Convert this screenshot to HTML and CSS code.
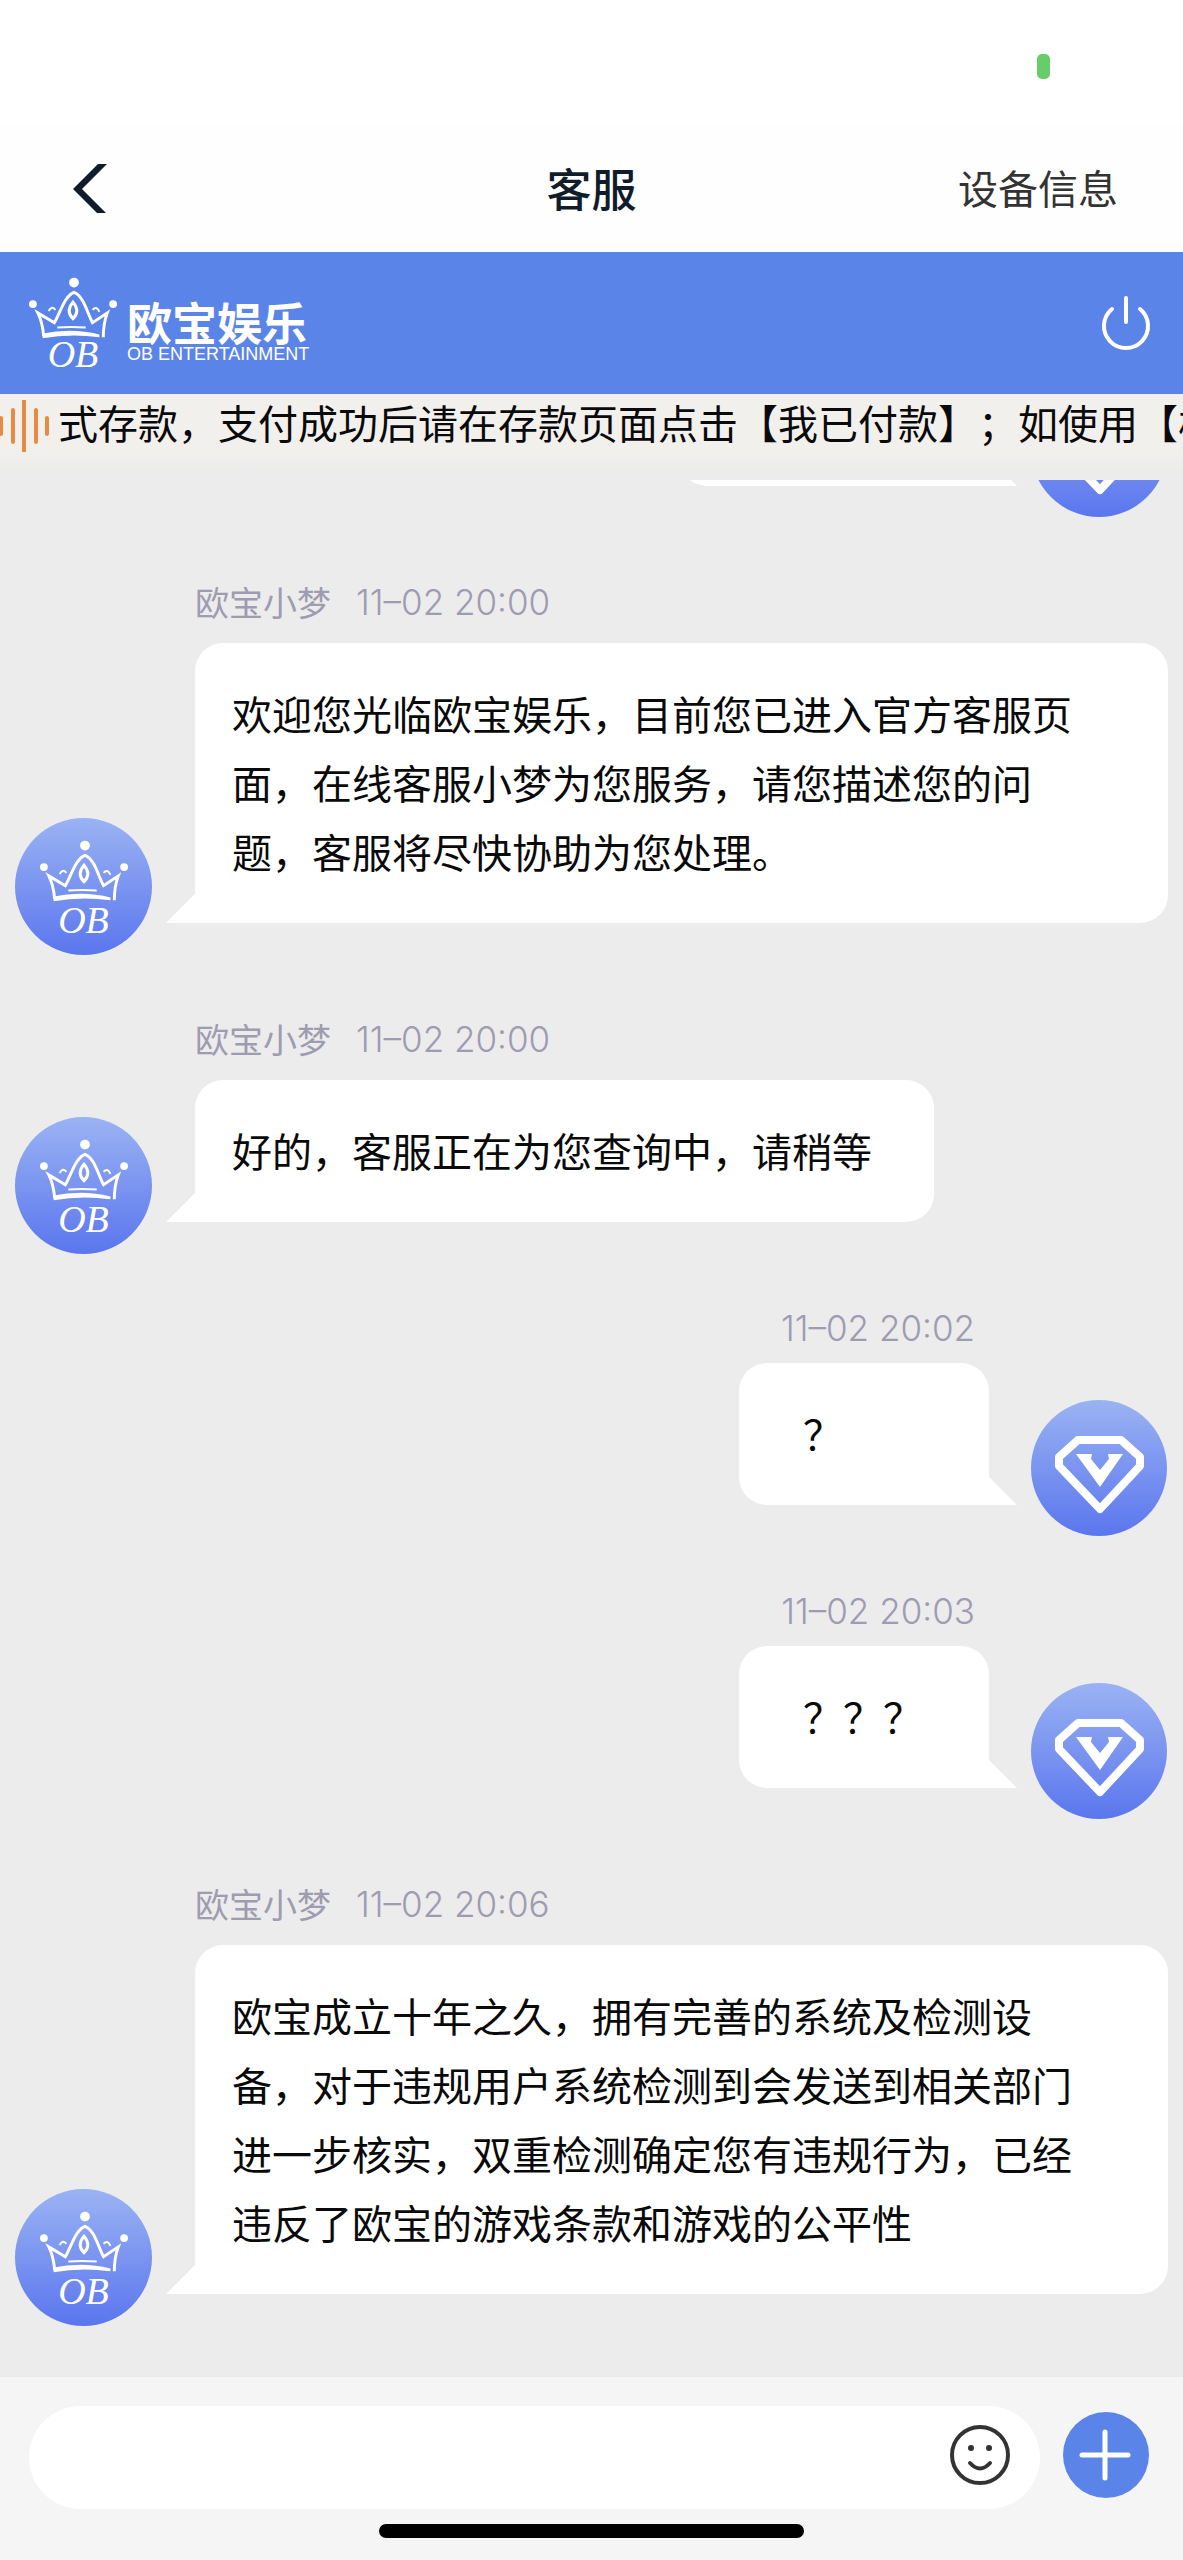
FILE: index.html
```
<!DOCTYPE html>
<html lang="zh-CN">
<head>
    <meta charset="UTF-8">
    <meta name="viewport" content="width=device-width, initial-scale=1.0">
    <title>客服</title>
    <link rel="stylesheet" href="styles.css">
</head>
<body>
    <!-- shared icons -->
    <svg class="sprite" aria-hidden="true">
        <defs>
            <linearGradient id="avatarBg" x1="0" y1="0" x2="0" y2="1">
                <stop offset="0" stop-color="#9ab3f3"/>
                <stop offset="1" stop-color="#5b76ee"/>
            </linearGradient>
        </defs>
        <symbol id="crown" viewBox="0 0 92 62">
            <g fill="#fff">
                <circle cx="47" cy="5" r="5"/>
                <circle cx="5" cy="27" r="4"/>
                <circle cx="87" cy="27" r="4"/>
                <path d="M15 57q30-6 58 1v3q-30-4-58 1z"/>
            </g>
            <g fill="none" stroke="#fff" stroke-width="3">
                <path d="M16 60Q15 46 10 36l17 10c6-10 10-27 20-31 10 4 13 20 19 31l15-10c-3 8-4 15-4 25"/>
                <path d="M46 25c-5 6-5 12 0 17 5-5 5-11 0-17z"/>
                <path d="M21 34q4-6 7-1M66 33q4-5 7 2M30 51q14-1 29 0" stroke-width="2"/>
            </g>
        </symbol>
        <symbol id="diamond" viewBox="0 0 137 137">
            <circle cx="68" cy="68" r="68" fill="url(#avatarBg)"/>
            <path d="M47 40h43l19 17v9l-40 43-41-43v-9z" fill="none" stroke="#fff" stroke-width="8" stroke-linejoin="round"/>
            <path d="M45 54h16l-1 5 9 11 9-11-1-5h15L69 87z" fill="#fff"/>
        </symbol>
    </svg>

    <div class="status-bar"><span class="camera-dot"></span></div>

    <header class="nav">
        <button class="back" aria-label="返回">
            <svg viewBox="0 0 44 54"><path d="M42 4H33L8 29l24 24h9L17 29z" fill="#111c2b"/></svg>
        </button>
        <h1>客服</h1>
        <a class="device" href="#">设备信息</a>
    </header>

    <div class="brand">
        <div class="mark">
            <svg class="mark-crown"><use href="#crown"/></svg>
            <span>OB</span>
        </div>
        <div class="brand-name">
            <strong>欧宝娱乐</strong>
            <small>OB ENTERTAINMENT</small>
        </div>
        <button class="power" aria-label="退出">
            <svg viewBox="0 0 50 54"><path d="M25 2v24M11 13a22 22 0 1 0 28 0" fill="none" stroke="#fff" stroke-width="4" stroke-linecap="round"/></svg>
        </button>
    </div>

    <div class="notice">
        <svg viewBox="0 0 50 52"><path d="M1 18v16M13 10v32M24 1v50M36 10v32M47 18v16" stroke="#e88b42" stroke-width="4" stroke-linecap="round"/></svg>
        <p>式存款，支付成功后请在存款页面点击【我已付款】；如使用【极</p>
    </div>

    <main class="chat">
        <div class="msg sent">
            <div class="body"><div class="bubble wide"></div></div>
            <svg class="avatar"><use href="#diamond"/></svg>
        </div>

        <div class="msg">
            <div class="avatar agent">
                <svg class="avatar-crown"><use href="#crown"/></svg>
                <span>OB</span>
            </div>
            <div class="body">
                <div class="meta"><span>欧宝小梦</span><time>11–02 20:00</time></div>
                <div class="bubble">欢迎您光临欧宝娱乐，目前您已进入官方客服页面，在线客服小梦为您服务，请您描述您的问题，客服将尽快协助为您处理。</div>
            </div>
        </div>

        <div class="msg">
            <div class="avatar agent">
                <svg class="avatar-crown"><use href="#crown"/></svg>
                <span>OB</span>
            </div>
            <div class="body">
                <div class="meta"><span>欧宝小梦</span><time>11–02 20:00</time></div>
                <div class="bubble">好的，客服正在为您查询中，请稍等</div>
            </div>
        </div>

        <div class="msg sent">
            <div class="body">
                <div class="meta"><time>11–02 20:02</time></div>
                <div class="bubble">？</div>
            </div>
            <svg class="avatar"><use href="#diamond"/></svg>
        </div>

        <div class="msg sent">
            <div class="body">
                <div class="meta"><time>11–02 20:03</time></div>
                <div class="bubble">？？？</div>
            </div>
            <svg class="avatar"><use href="#diamond"/></svg>
        </div>

        <div class="msg">
            <div class="avatar agent">
                <svg class="avatar-crown"><use href="#crown"/></svg>
                <span>OB</span>
            </div>
            <div class="body">
                <div class="meta"><span>欧宝小梦</span><time>11–02 20:06</time></div>
                <div class="bubble">欧宝成立十年之久，拥有完善的系统及检测设备，对于违规用户系统检测到会发送到相关部门进一步核实，双重检测确定您有违规行为，已经违反了欧宝的游戏条款和游戏的公平性</div>
            </div>
        </div>
    </main>

    <footer class="composer">
        <div class="row">
            <div class="field">
                <input type="text" aria-label="输入消息">
                <button class="emoji" aria-label="表情">
                    <svg viewBox="0 0 60 60">
                        <circle cx="30" cy="30" r="28" fill="none" stroke="#333" stroke-width="4"/>
                        <circle cx="21" cy="23" r="3" fill="#333"/>
                        <circle cx="39" cy="23" r="3" fill="#333"/>
                        <path d="M20 38q10 11 20 0" fill="none" stroke="#333" stroke-width="4" stroke-linecap="round"/>
                    </svg>
                </button>
            </div>
            <button class="plus" aria-label="更多">
                <svg viewBox="0 0 86 86"><path d="M42 20v46M19 43h46" stroke="#fff" stroke-width="5" stroke-linecap="round"/></svg>
            </button>
        </div>
        <div class="home-bar"></div>
    </footer>
</body>
</html>
```
FILE: styles.css
```
* {
    box-sizing: border-box;
}
body {
    margin: 0;
    height: 100vh;
    display: flex;
    flex-direction: column;
    background-color: #ececec;
    font-family: "Noto Sans CJK SC", sans-serif;
    font-size: 40px;
    color: #0a0a0a;
}
h1, p {
    margin: 0;
}
button {
    padding: 0;
    border: none;
    background: none;
    cursor: pointer;
}
svg {
    display: block;
}
.sprite {
    position: absolute;
    width: 0;
    height: 0;
}

/* top */
.status-bar {
    display: flex;
    justify-content: flex-end;
    height: 126px;
    padding: 54px 133px 0;
    background-color: #fff;
}
.camera-dot {
    width: 13px;
    height: 25px;
    border-radius: 5px;
    background-color: #67cd68;
}
.nav {
    display: grid;
    grid-template-columns: 1fr auto 1fr;
    align-items: center;
    height: 126px;
    padding: 0 65px 4px;
    background-color: #fefefe;
}
.back {
    justify-self: start;
}
.back svg {
    width: 44px;
    height: 54px;
}
.nav h1 {
    font-size: 45px;
    font-weight: 500;
    color: #111c2b;
}
.device {
    justify-self: end;
    color: #333;
    text-decoration: none;
}
.brand {
    display: flex;
    align-items: center;
    height: 142px;
    padding: 0 32px 0 28px;
    background-color: #5b84e9;
    color: #fff;
}
.mark {
    width: 90px;
    margin-right: 9px;
}
.mark-crown {
    width: 90px;
    height: 62px;
}
.mark span {
    display: block;
    text-align: center;
    font-family: "Liberation Serif", serif;
    font-style: italic;
    font-size: 38px;
    line-height: 30px;
}
.brand-name {
    flex: 1;
    display: flex;
    flex-direction: column;
    padding-top: 22px;
}
.brand-name strong {
    font-size: 45px;
    font-weight: 700;
    line-height: 40px;
}
.brand-name small {
    font-family: "Liberation Sans", sans-serif;
    font-size: 18px;
    line-height: 24px;
}
.power svg {
    width: 50px;
    height: 54px;
}
.notice {
    display: flex;
    height: 86px;
    overflow: hidden;
    background: linear-gradient(#f2f0ed 60px, #ececec 76px);
}
.notice svg {
    flex: none;
    width: 50px;
    height: 52px;
    margin: 6px 8px 0 0;
}
.notice p {
    flex: none;
    line-height: 56px;
    white-space: nowrap;
    text-spacing-trim: space-all;
}

/* messages, pinned to the newest one */
.chat {
    flex: 1;
    min-height: 0;
    display: flex;
    flex-direction: column;
    justify-content: flex-end;
    padding: 0 15px 51px;
    overflow: hidden;
}
.msg {
    display: flex;
    align-items: flex-end;
    gap: 43px;
    margin-top: 60px;
}
.msg.sent {
    justify-content: flex-end;
    gap: 42px;
    margin-top: 50px;
}
.avatar {
    flex: none;
    width: 137px;
    height: 137px;
}
.agent {
    display: flex;
    flex-direction: column;
    align-items: center;
    padding-top: 22px;
    border-radius: 50%;
    background: linear-gradient(#9ab3f3, #5b76ee);
    color: #fff;
}
.avatar-crown {
    width: 90px;
    height: 62px;
}
.agent span {
    font-family: "Liberation Serif", serif;
    font-style: italic;
    font-size: 38px;
    line-height: 36px;
}
.body {
    display: flex;
    flex-direction: column;
    align-items: flex-start;
    margin-bottom: 32px;
}
.sent .body {
    align-items: flex-end;
}
.meta {
    display: flex;
    gap: 25px;
    height: 48px;
    margin-bottom: 17px;
    font-size: 34px;
    line-height: 48px;
    color: #9f9bb0;
}
.sent .meta {
    margin-bottom: 11px;
    padding-right: 14px;
}
.meta time {
    font-family: Inter, sans-serif;
    font-size: 35px;
    font-weight: 300;
}
.bubble {
    position: relative;
    padding: 36px 62px 37px 37px;
    border-radius: 28px 28px 28px 0;
    background-color: #fff;
    line-height: 69px;
}
.bubble::before {
    content: "";
    position: absolute;
    left: -29px;
    bottom: 0;
    width: 30px;
    height: 30px;
    background-color: #fff;
    clip-path: polygon(100% 0, 100% 100%, 0 100%);
}
.sent .bubble {
    min-width: 250px;
    padding: 36px 62px 37px 64px;
    border-radius: 28px 28px 0 28px;
}
.sent .bubble::before {
    left: auto;
    right: -28px;
    clip-path: polygon(0 0, 100% 100%, 0 100%);
}
.sent .wide {
    width: 310px;
    height: 142px;
}

/* input area */
.composer {
    padding: 29px 0 22px;
    background-color: #f5f5f5;
}
.row {
    display: flex;
    align-items: center;
    gap: 23px;
    padding: 0 34px 0 29px;
}
.field {
    flex: 1;
    display: flex;
    align-items: center;
    height: 103px;
    padding: 0 30px 0 40px;
    border-radius: 52px;
    background-color: #fff;
}
.field input {
    flex: 1;
    min-width: 0;
    border: none;
    outline: none;
    background: none;
    font: inherit;
}
.emoji, .plus {
    margin-bottom: 6px;
}
.emoji svg {
    width: 60px;
    height: 60px;
}
.plus {
    border-radius: 50%;
    background-color: #5b84e9;
}
.plus svg {
    width: 86px;
    height: 86px;
}
.home-bar {
    width: 36%;
    height: 14px;
    margin: 15px auto 0;
    border-radius: 7px;
    background-color: #000;
}
```
